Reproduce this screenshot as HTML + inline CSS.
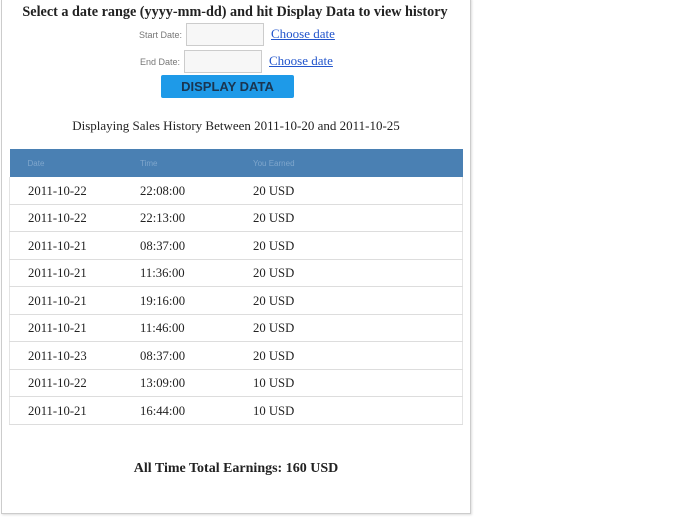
<!DOCTYPE html>
<html><head><style>
body{margin:0;width:700px;height:523px;background:#fff;position:relative;overflow:hidden;font-family:"Liberation Serif",serif;color:#222}
.box{position:absolute;left:1px;top:-2px;width:468px;height:514px;border:1px solid #ccc;box-shadow:1px 1px 2px #ddd}
.a{position:absolute}
.lbl{font-family:"Liberation Sans",sans-serif;font-size:9px;color:#777;text-align:right;width:80px}
.in{border:1px solid #ccc;background:#f7f7f7;width:76px;height:21px}
.lk{color:#2255cc;text-decoration:underline;font-size:13px}
table{position:absolute;left:9px;top:149px;width:454px;border-collapse:collapse;font-size:12.7px}
th{background:#4a80b3;color:#7fa6cc;font-family:"Liberation Sans",sans-serif;font-size:8px;font-weight:normal;text-align:left;height:28px;padding:0}
td{height:24.5px;border-bottom:1px solid #ddd;padding:2px 0 0 0}
tr td:first-child,tr th:first-child{padding-left:18px;width:112px}
tr td:nth-child(2),tr th:nth-child(2){width:113px}
td:first-child{border-left:1px solid #e4e4e4}
td:last-child{border-right:1px solid #e4e4e4}
</style></head><body>
<div class="box"></div>
<div class="a" style="left:0;width:470px;top:4px;text-align:center;font-weight:bold;font-size:14.2px">Select a date range (yyyy-mm-dd) and hit Display Data to view history</div>
<div class="a lbl" style="left:102px;top:30px">Start Date:</div>
<div class="a in" style="left:186px;top:23px"></div>
<div class="a lk" style="left:271px;top:26px">Choose date</div>
<div class="a lbl" style="left:100px;top:57px">End Date:</div>
<div class="a in" style="left:184px;top:50px"></div>
<div class="a lk" style="left:269px;top:53px">Choose date</div>
<div class="a" style="left:161px;top:75px;width:133px;height:23px;background:#1e9ae8;border-radius:2px;font-family:'Liberation Sans',sans-serif;font-weight:bold;font-size:13px;color:#1a3550;text-align:center;line-height:23px">DISPLAY DATA</div>
<div class="a" style="left:0;width:472px;top:118px;text-align:center;font-size:13px">Displaying Sales History Between 2011-10-20 and 2011-10-25</div>
<table>
<tr><th>Date</th><th>Time</th><th>You Earned</th></tr>
<tr><td>2011-10-22</td><td>22:08:00</td><td>20 USD</td></tr>
<tr><td>2011-10-22</td><td>22:13:00</td><td>20 USD</td></tr>
<tr><td>2011-10-21</td><td>08:37:00</td><td>20 USD</td></tr>
<tr><td>2011-10-21</td><td>11:36:00</td><td>20 USD</td></tr>
<tr><td>2011-10-21</td><td>19:16:00</td><td>20 USD</td></tr>
<tr><td>2011-10-21</td><td>11:46:00</td><td>20 USD</td></tr>
<tr><td>2011-10-23</td><td>08:37:00</td><td>20 USD</td></tr>
<tr><td>2011-10-22</td><td>13:09:00</td><td>10 USD</td></tr>
<tr><td>2011-10-21</td><td>16:44:00</td><td>10 USD</td></tr>
</table>
<div class="a" style="left:0;width:472px;top:461px;text-align:center;font-weight:bold;font-size:14px">All Time Total Earnings: 160 USD</div>
</body></html>
